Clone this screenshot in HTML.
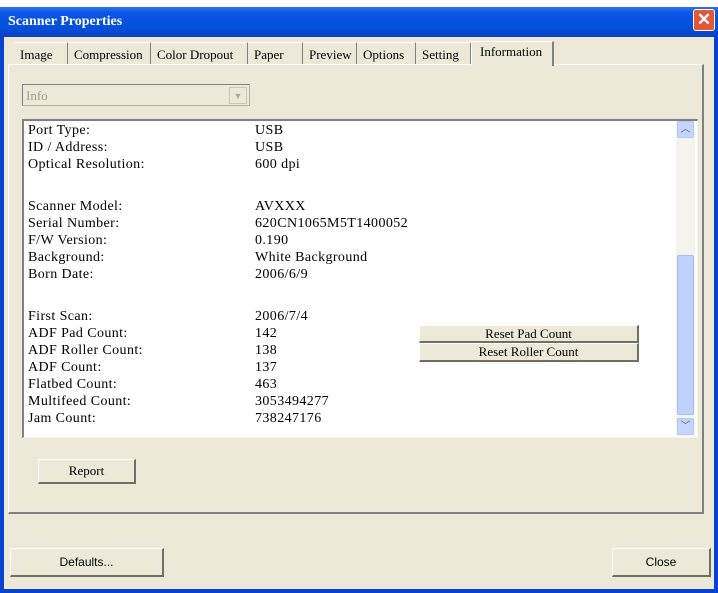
<!DOCTYPE html>
<html><head><style>
*{margin:0;padding:0;box-sizing:border-box}
body{width:718px;height:593px;background:#fff;position:relative;overflow:hidden;font-family:"Liberation Serif",serif;font-size:13px;color:#000}
.a{position:absolute}
.win{left:0;top:7px;width:718px;height:586px;background:#0842d0;}
.title{left:0;top:7px;width:718px;height:30px;background:linear-gradient(#2a74f0,#0a55e3 20%,#0450dc 70%,#0a3fc0);color:#fff;font-weight:bold;font-size:14px;padding:7px 0 0 8px;font-family:"Liberation Serif",serif}
.body{left:4px;top:37px;width:710px;height:552px;background:#ece9d8}
.tab{top:42px;height:22px;border-top:1px solid #fff;border-right:1px solid #808080;padding:4px 0 0 6px;white-space:nowrap;font-size:13px}
.panel{left:8px;top:64px;width:696px;height:450px;border-top:1px solid #fff;border-left:1px solid #fff;border-right:2px solid #808080;border-bottom:2px solid #808080}
.btn{background:#ece9d8;border-top:1px solid #fff;border-left:1px solid #fff;border-right:2px solid #716f64;border-bottom:2px solid #716f64;text-align:center}
.r,.v{font-size:14px;letter-spacing:0.4px;top:0}
.r{left:28px}.v{left:255px}
</style></head><body>
<div class="a win"></div>
<div class="a title">Scanner Properties</div>
<div class="a" style="left:693px;top:9px;width:22px;height:22px;background:#e2593a;border:1px solid #fff;border-radius:3px;color:#fff;font:bold 17px 'Liberation Sans',sans-serif;text-align:center;line-height:20px">✕</div>
<div class="a body"></div>
<div class="a panel"></div>
<div class="a tab" style="left:14px;width:54px;border-right:1px solid #808080">Image</div>
<div class="a tab" style="left:68px;width:83px">Compression</div>
<div class="a tab" style="left:151px;width:97px">Color Dropout</div>
<div class="a tab" style="left:248px;width:55px">Paper</div>
<div class="a tab" style="left:303px;width:54px">Preview</div>
<div class="a tab" style="left:357px;width:59px">Options</div>
<div class="a tab" style="left:416px;width:55px">Setting</div>
<div class="a" style="left:471px;top:41px;width:83px;height:25px;background:#ece9d8;border-top:1px solid #fff;border-left:1px solid #fff;border-right:2px solid #808080;padding:2px 0 0 8px">Information</div>
<div class="a" style="left:22px;top:84px;width:228px;height:22px;border:1px solid #b5b2a5;border-top-color:#808080;border-left-color:#808080;background:#ece9d8;color:#a19f94;padding:3px 3px">Info</div>
<div class="a" style="left:229px;top:87px;width:18px;height:17px;border:1px solid #c9c6b8;color:#aaa;font-size:9px;text-align:center;line-height:16px">▼</div>
<div class="a" style="left:22px;top:119px;width:676px;height:319px;background:#fff;border-top:2px solid #808080;border-left:2px solid #808080;border-bottom:1px solid #f4f3ee;border-right:1px solid #f4f3ee"></div>
<div class="a" style="left:676px;top:121px;width:19px;height:315px;background:#f4f3ee"></div>
<div class="a" style="left:677px;top:121px;width:17px;height:17px;background:#c5d5fc;border:1px solid #b4c8f6;border-radius:2px;color:#4d6185;font-size:10px;text-align:center;line-height:15px">︿</div>
<div class="a" style="left:677px;top:255px;width:17px;height:160px;background:#c0d1fb;border:1px solid #a8bef0;border-radius:2px"></div>
<div class="a" style="left:677px;top:418px;width:17px;height:17px;background:#c5d5fc;border:1px solid #b4c8f6;border-radius:2px;color:#4d6185;font-size:10px;text-align:center;line-height:15px">﹀</div>
<div class="a" style="left:0;top:123px;width:670px;height:310px">
<div class="a r" style="top:0">Port Type:</div><div class="a v" style="top:0">USB</div>
<div class="a r" style="top:17px">ID / Address:</div><div class="a v" style="top:17px">USB</div>
<div class="a r" style="top:34px">Optical Resolution:</div><div class="a v" style="top:34px">600 dpi</div>
<div class="a r" style="top:76px">Scanner Model:</div><div class="a v" style="top:76px">AVXXX</div>
<div class="a r" style="top:93px">Serial Number:</div><div class="a v" style="top:93px">620CN1065M5T1400052</div>
<div class="a r" style="top:110px">F/W Version:</div><div class="a v" style="top:110px">0.190</div>
<div class="a r" style="top:127px">Background:</div><div class="a v" style="top:127px">White Background</div>
<div class="a r" style="top:144px">Born Date:</div><div class="a v" style="top:144px">2006/6/9</div>
<div class="a r" style="top:186px">First Scan:</div><div class="a v" style="top:186px">2006/7/4</div>
<div class="a r" style="top:203px">ADF Pad Count:</div><div class="a v" style="top:203px">142</div>
<div class="a r" style="top:220px">ADF Roller Count:</div><div class="a v" style="top:220px">138</div>
<div class="a r" style="top:237px">ADF Count:</div><div class="a v" style="top:237px">137</div>
<div class="a r" style="top:254px">Flatbed Count:</div><div class="a v" style="top:254px">463</div>
<div class="a r" style="top:271px">Multifeed Count:</div><div class="a v" style="top:271px">3053494277</div>
<div class="a r" style="top:288px">Jam Count:</div><div class="a v" style="top:288px">738247176</div>
</div>
<div class="a btn" style="left:419px;top:325px;width:220px;height:18px;line-height:15px">Reset Pad Count</div>
<div class="a btn" style="left:419px;top:343px;width:220px;height:19px;line-height:16px">Reset Roller Count</div>
<div class="a btn" style="left:38px;top:459px;width:98px;height:25px;line-height:22px">Report</div>
<div class="a btn" style="left:10px;top:548px;width:154px;height:29px;line-height:26px;font-family:'Liberation Sans',sans-serif;font-size:12px">Defaults...</div>
<div class="a btn" style="left:612px;top:548px;width:99px;height:29px;line-height:26px;font-family:'Liberation Sans',sans-serif;font-size:12px">Close</div>
</body></html>
